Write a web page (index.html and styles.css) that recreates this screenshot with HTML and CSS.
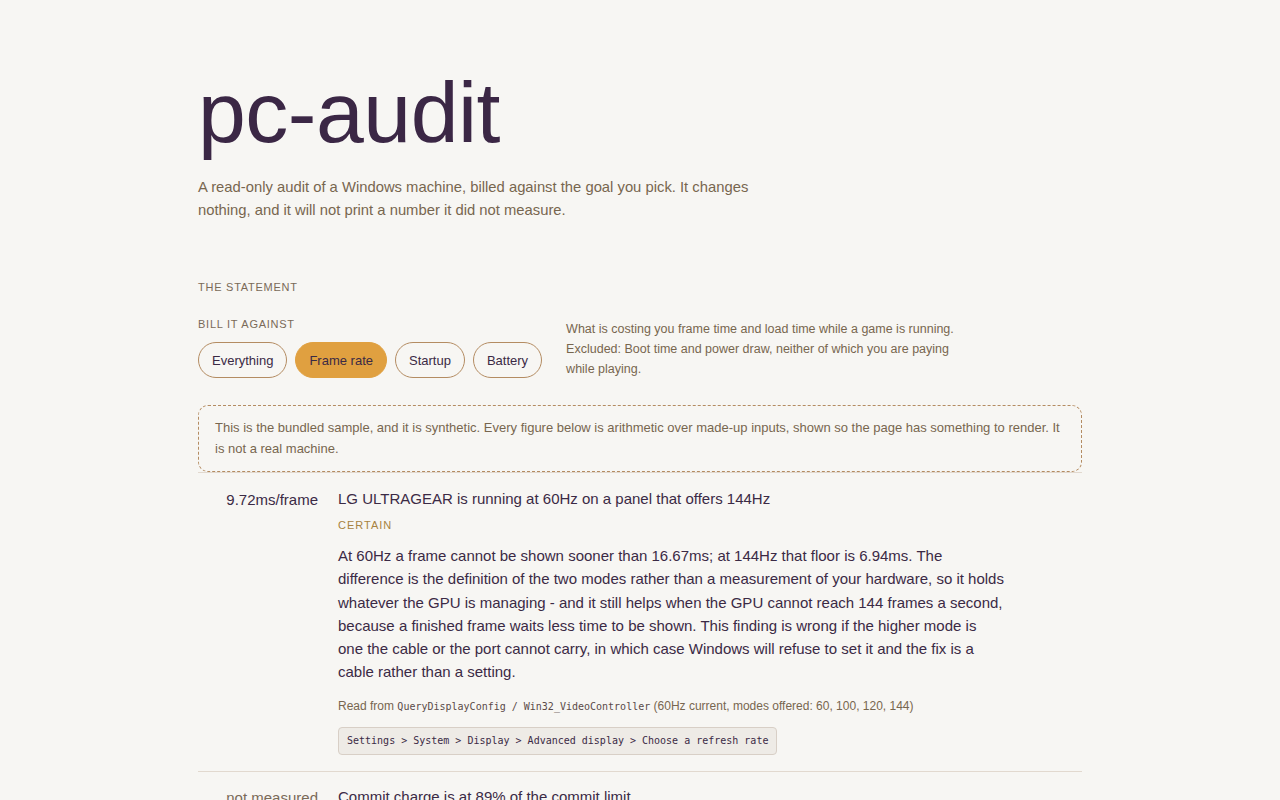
FILE: index.html
```html
<!DOCTYPE html>
<html lang="en">
<head>
<meta charset="utf-8">
<title>pc-audit</title>
<link rel="stylesheet" href="styles.css">
</head>
<body>
<main class="page">
  <header class="hero">
    <h1 class="title">pc-audit</h1>
    <p class="lede">A read-only audit of a Windows machine, billed against the goal you pick. It changes nothing, and it will not print a number it did not measure.</p>
  </header>

  <section class="statement">
    <h2 class="eyebrow">The statement</h2>
    <div class="bill">
      <div class="bill-left">
        <div class="eyebrow small">Bill it against</div>
        <div class="pills">
          <button class="pill">Everything</button>
          <button class="pill active">Frame rate</button>
          <button class="pill">Startup</button>
          <button class="pill">Battery</button>
        </div>
      </div>
      <p class="bill-desc">What is costing you frame time and load time while a game is running. Excluded: Boot time and power draw, neither of which you are paying while playing.</p>
    </div>

    <div class="notice">This is the bundled sample, and it is synthetic. Every figure below is arithmetic over made-up inputs, shown so the page has something to render. It is not a real machine.</div>

    <article class="finding">
      <div class="cost">9.72ms/frame</div>
      <div class="body">
        <h3 class="f-title">LG ULTRAGEAR is running at 60Hz on a panel that offers 144Hz</h3>
        <div class="confidence">Certain</div>
        <p class="f-text">At 60Hz a frame cannot be shown sooner than 16.67ms; at 144Hz that floor is 6.94ms. The difference is the definition of the two modes rather than a measurement of your hardware, so it holds whatever the GPU is managing - and it still helps when the GPU cannot reach 144 frames a second, because a finished frame waits less time to be shown. This finding is wrong if the higher mode is one the cable or the port cannot carry, in which case Windows will refuse to set it and the fix is a cable rather than a setting.</p>
        <p class="source">Read from <code>QueryDisplayConfig / Win32_VideoController</code> (60Hz current, modes offered: 60, 100, 120, 144)</p>
        <div class="path">Settings &gt; System &gt; Display &gt; Advanced display &gt; Choose a refresh rate</div>
      </div>
    </article>

    <article class="finding">
      <div class="cost muted">not measured</div>
      <div class="body">
        <h3 class="f-title">Commit charge is at 89% of the commit limit</h3>
      </div>
    </article>
  </section>
</main>
</body>
</html>
```

FILE: styles.css
```css
* { box-sizing: border-box; }
html, body { margin: 0; padding: 0; }
body {
  background: #f7f6f3;
  color: #3b2a45;
  font-family: "Liberation Sans", Arial, sans-serif;
}
.page {
  width: 884px;
  margin: 0 auto;
  padding-top: 62px;
}
.title {
  margin: 0;
  font-weight: 400;
  font-size: 86px;
  line-height: 100px;
  color: #3b2745;
  letter-spacing: -0.5px;
}
.lede {
  margin: 14px 0 0;
  width: 556px;
  font-size: 14.8px;
  line-height: 23px;
  color: #77664f;
}
.statement { margin-top: 58px; }
.eyebrow {
  margin: 0;
  font-size: 11px;
  font-weight: 400;
  letter-spacing: 0.75px;
  text-transform: uppercase;
  color: #7a6a58;
  line-height: 14px;
}
.bill {
  display: flex;
  gap: 24px;
  margin-top: 23px;
  align-items: flex-start;
}
.pills {
  display: flex;
  gap: 8px;
  margin-top: 11px;
}
.pill {
  font-family: inherit;
  font-size: 13px;
  height: 36px;
  padding: 0 13px;
  border-radius: 18px;
  border: 1px solid #b48c62;
  background: transparent;
  color: #3b2a45;
}
.pill.active {
  background: #e0a040;
  border-color: #e0a040;
}
.bill-desc {
  margin: 2px 0 0;
  width: 410px;
  font-size: 12.5px;
  line-height: 20px;
  color: #77664f;
}
.notice {
  margin-top: 26px;
  border: 1px dashed #b48c62;
  border-radius: 10px;
  padding: 11px 16px 12px;
  font-size: 13px;
  line-height: 21px;
  color: #77664f;
}
.finding {
  display: grid;
  grid-template-columns: 120px 1fr;
  column-gap: 20px;
  border-top: 1px solid #e2d9cf;
  padding: 16px 0 16px;
}
.finding + .finding { padding-top: 15px; }
.cost {
  text-align: right;
  font-size: 15px;
  line-height: 22px;
  color: #3b2a45;
}
.cost.muted { color: #7a6a58; }
.f-title {
  margin: -1px 0 0;
  font-size: 15px;
  font-weight: 400;
  line-height: 21px;
  color: #3b2a45;
}
.confidence {
  margin-top: 9px;
  font-size: 11px;
  letter-spacing: 1px;
  text-transform: uppercase;
  color: #a78341;
  line-height: 14px;
}
.f-text {
  margin: 12px 0 0;
  max-width: 666px;
  font-size: 15px;
  line-height: 23.3px;
  color: #3b2a45;
}
.source {
  margin: 13px 0 0;
  font-size: 12px;
  line-height: 18px;
  color: #77664f;
}
code, .path {
  font-family: "DejaVu Sans Mono", "Liberation Mono", monospace;
  font-size: 10px;
}
code { color: #5a4a48; }
.path {
  display: inline-block;
  margin-top: 11px;
  padding: 0 8px;
  height: 28px;
  line-height: 26px;
  border: 1px solid #d8cfc6;
  border-radius: 4px;
  background: #eeebe6;
  color: #3b2a45;
}
```
